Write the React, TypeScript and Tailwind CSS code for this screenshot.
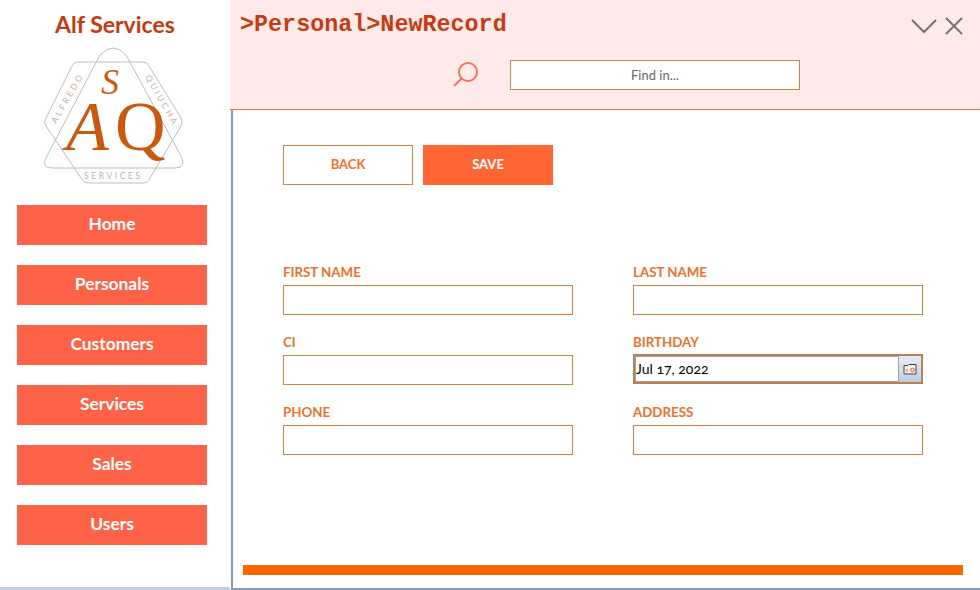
const menu = ['Home', 'Personals', 'Customers', 'Services', 'Sales', 'Users'];

const Logo = () => (
    <svg width="146" height="142" viewBox="40 45 146 142" fill="none" className="ml-[40px] mt-[8px]">
        <g stroke="#bdbdbd" strokeWidth="1" strokeLinejoin="round">
            <path d="M100 55 Q113 41 126 55 L181 156 Q187 168 175 168 L52 168 Q40 168 47 156 Z" />
            <path d="M77 62 L143 62 Q147 62 149 66 L181 118 Q183 122 181 126 L150 178 Q148 183 143 183 L88 183 Q84 183 81 178 L46 126 Q43 122 46 118 L72 66 Q74 62 77 62 Z" />
        </g>
        <g fill="#c9ada0" fontFamily="Lato, sans-serif" fontSize="8.5" letterSpacing="2.6">
            <text x="0" y="0" transform="translate(56 124) rotate(-60)">ALFREDO</text>
            <text x="0" y="0" transform="translate(145 77) rotate(60)">QUIUCHA</text>
            <text x="84" y="179">SERVICES</text>
        </g>
        <g fill="#c8590f" fontFamily="'Liberation Serif', serif">
            <text x="101" y="94" fontSize="36" fontStyle="italic">S</text>
            <text x="66" y="150" fontSize="70" fontStyle="italic">A</text>
            <text x="115" y="150" fontSize="70">Q</text>
        </g>
    </svg>
);

const Field = ({ label }: { label: string }) => (
    <div className="flex flex-col w-[290px]">
        <label className="text-[13.3px] leading-[16px] font-bold text-[#e8732c]">{label}</label>
        <input type="text" className="mt-[5px] h-[30px] bg-white border border-[#d2803e] outline-none" />
    </div>
);

const DateField = () => (
    <div className="flex flex-col w-[290px]">
        <label className="text-[13.3px] leading-[16px] font-bold text-[#e8732c]">BIRTHDAY</label>
        <div className="mt-[4px] h-[30px] flex border-2 border-[#b97f56] bg-white">
            <div className="flex-1 flex items-center border border-[#a9a29c] pb-[2px] text-[14px] text-black oldstyle-nums">
                Jul 17, 2022
            </div>
            <div className="w-[22px] flex items-center justify-center bg-gradient-to-b from-[#e4ecf5] to-[#bccfe3]">
                <svg width="14" height="12" viewBox="0 0 14 12" fill="none">
                    <path d="M1 2.5 H5 L6 1.5 H13 V11 H1 Z" fill="#f6efe4" stroke="#4a4038" />
                    <circle cx="9.5" cy="7" r="1.8" stroke="#d0605a" />
                    <path d="M4 6 V9" stroke="#d0605a" />
                </svg>
            </div>
        </div>
    </div>
);

const App = () => {
    return (
        <div className="flex w-[980px] h-[590px] overflow-hidden bg-white font-['Lato','Open_Sans',sans-serif]">
            <aside className="w-[230px] shrink-0 flex flex-col border-b-[3px] border-[#c3d1e2]">
                <h1 className="mt-[11px] h-[26px] text-center text-[23px] leading-[26px] font-bold text-[#c4390f]">
                    Alf Services
                </h1>
                <Logo />
                <nav className="mt-[18px] pl-[17px] flex flex-col gap-5">
                    {menu.map((item) => (
                        <a
                            key={item}
                            className="w-[190px] h-10 pb-[2px] flex items-center justify-center bg-[#ff6347] text-white text-[17.4px] font-bold"
                        >
                            {item}
                        </a>
                    ))}
                </nav>
            </aside>
            <main className="flex-1 flex flex-col min-w-0">
                <header className="h-[110px] shrink-0 bg-[#ffeaea] border-b border-[#e07b39] flex flex-col">
                    <div className="flex items-start justify-between pl-[10px] pr-[17px]">
                        <div className="mt-[11px] font-['Liberation_Mono',monospace] font-bold text-[23.4px] leading-[28px] text-[#c63c12]">
                            &gt;Personal&gt;NewRecord
                        </div>
                        <svg width="52" height="18" viewBox="0 0 52 18" fill="none" stroke="#757575" strokeWidth="2" className="mt-[17px]">
                            <path d="M1 3 L13 15 L25 3" />
                            <path d="M35 1 L51 17 M51 1 L35 17" />
                        </svg>
                    </div>
                    <div className="mt-[21px] flex items-center pl-[222px]">
                        <svg width="28" height="28" viewBox="0 0 28 28" fill="none" stroke="#ee7661" strokeWidth="2">
                            <circle cx="16" cy="11" r="9" />
                            <path d="M9.5 17.5 L2 25" />
                        </svg>
                        <input
                            placeholder="Find in..."
                            className="ml-[30px] w-[290px] h-[30px] bg-white border border-[#d2803e] text-center text-[13px] placeholder:text-[#666] outline-none"
                        />
                    </div>
                </header>
                <section className="flex-1 ml-px border-l-2 border-b-2 border-l-[#8399bd] border-b-[#8399bd] pl-[50px] flex flex-col min-h-0">
                    <div className="mt-[35px] flex gap-[10px]">
                        <button className="w-[130px] h-10 border border-[#d2803e] text-[#ee702c] text-[13px] font-bold">BACK</button>
                        <button className="w-[130px] h-10 bg-[#ff6633] text-white text-[13px] font-bold">SAVE</button>
                    </div>
                    <div className="mt-[79px] grid grid-cols-[290px_290px] gap-x-[60px] gap-y-[19px]">
                        <Field label="FIRST NAME" />
                        <Field label="LAST NAME" />
                        <Field label="CI" />
                        <DateField />
                        <Field label="PHONE" />
                        <Field label="ADDRESS" />
                    </div>
                    <div className="mt-[110px] -ml-[40px] w-[720px] h-[10px] bg-[#ff6600]" />
                </section>
            </main>
        </div>
    );
};

export default App;
